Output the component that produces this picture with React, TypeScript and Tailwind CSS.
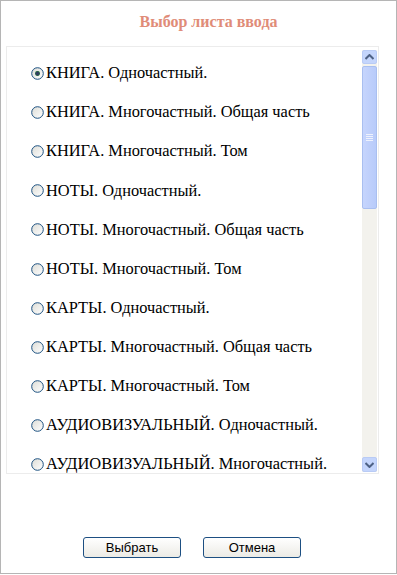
import React, { useState } from 'react';

const items = [
  'КНИГА. Одночастный.',
  'КНИГА. Многочастный. Общая часть',
  'КНИГА. Многочастный. Том',
  'НОТЫ. Одночастный.',
  'НОТЫ. Многочастный. Общая часть',
  'НОТЫ. Многочастный. Том',
  'КАРТЫ. Одночастный.',
  'КАРТЫ. Многочастный. Общая часть',
  'КАРТЫ. Многочастный. Том',
  'АУДИОВИЗУАЛЬНЫЙ. Одночастный.',
  'АУДИОВИЗУАЛЬНЫЙ. Многочастный.',
];

const Radio = ({ checked }: { checked: boolean }) => (
  <svg width="13" height="13" viewBox="0 0 13 13" className="shrink-0">
    <defs>
      <linearGradient id="rg" x1="0" y1="0" x2="1" y2="1">
        <stop offset="0" stopColor="#dcdcd6" />
        <stop offset="1" stopColor="#ffffff" />
      </linearGradient>
    </defs>
    <circle cx="6.5" cy="6.5" r="5.8" fill="url(#rg)" stroke="#1c5180" strokeWidth="1" />
    {checked && <circle cx="6.5" cy="6.5" r="2.4" fill="#21a121" />}
    {checked && <circle cx="6.5" cy="6.5" r="2.2" fill="#2f3f5f" />}
  </svg>
);

const Arrow = ({ up }: { up: boolean }) => (
  <svg width="9" height="6" viewBox="0 0 9 6">
    <path d={up ? 'M0.5 5 L4.5 1 L8.5 5' : 'M0.5 1 L4.5 5 L8.5 1'} fill="none" stroke="#4d6185" strokeWidth="2" />
  </svg>
);

export default function App() {
  const [selected, setSelected] = useState(0);

  return (
    <div className="w-[397px] h-[575px] bg-white">
      <div className="w-[397px] h-[574px] border border-[#b5b5b5] flex flex-col">
        <div
          className="h-[45px] flex items-center justify-center pl-[20px] pb-[4px] text-[16px] font-bold text-[#e08c78]"
          style={{ fontFamily: '"Liberation Serif", serif' }}
        >
          Выбор листа ввода
        </div>
        <div className="ml-[5px] w-[373px] h-[428px] border border-[#ececec] flex">
          <div className="flex-1 overflow-hidden pt-[7px] pl-[24px]">
            {items.map((label, i) => (
              <label
                key={label}
                className="h-[39.1px] flex items-center gap-[2px] whitespace-nowrap cursor-default text-[16.4px] text-black"
                style={{ fontFamily: '"Liberation Serif", serif' }}
                onClick={() => setSelected(i)}
              >
                <Radio checked={selected === i} />
                <span>{label}</span>
              </label>
            ))}
          </div>
          <div className="w-[15px] mr-[1px] mt-[3px] mb-[1px] flex flex-col bg-[#f3f2ed]">
            <div className="h-[14px] border border-[#b9cbf5] rounded-[2px] bg-[#c4d5fc] flex items-center justify-center">
              <Arrow up />
            </div>
            <div className="mt-[2px] h-[143px] border border-[#a9bff0] rounded-[2px] bg-gradient-to-r from-[#c6d5fd] to-[#b8cbfa] flex items-center justify-center">
              <div className="flex flex-col gap-[1px]">
                <div className="w-[7px] h-[1px] bg-[#eef2fd]" />
                <div className="w-[7px] h-[1px] bg-[#eef2fd]" />
                <div className="w-[7px] h-[1px] bg-[#eef2fd]" />
                <div className="w-[7px] h-[1px] bg-[#eef2fd]" />
              </div>
            </div>
            <div className="flex-1" />
            <div className="h-[15px] border border-[#b9cbf5] rounded-[2px] bg-[#c4d5fc] flex items-center justify-center">
              <Arrow up={false} />
            </div>
          </div>
        </div>
        <div
          className="mt-[63px] flex gap-[22px] pl-[82px]"
          style={{ fontFamily: '"Liberation Sans", Arial, sans-serif' }}
        >
          <button className="w-[98px] h-[21px] border border-[#1d4f82] rounded-[3px] bg-gradient-to-b from-white to-[#ecebe5] text-[13px] text-black">
            Выбрать
          </button>
          <button className="w-[98px] h-[21px] border border-[#1d4f82] rounded-[3px] bg-gradient-to-b from-white to-[#ecebe5] text-[13px] text-black">
            Отмена
          </button>
        </div>
      </div>
    </div>
  );
}
